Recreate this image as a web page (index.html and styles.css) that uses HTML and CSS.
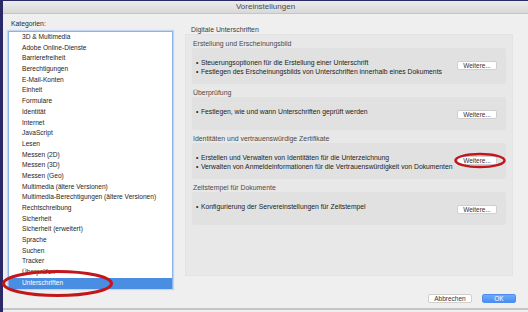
FILE: index.html
```html
<!DOCTYPE html>
<html lang="de">
<head>
    <meta charset="UTF-8">
    <meta name="viewport" content="width=device-width, initial-scale=1.0">
    <title>Voreinstellungen</title>
    <link rel="stylesheet" href="styles.css">
</head>
<body>
    <div class="screen">
        <div class="edge"></div>
        <div class="window">
            <div class="titlebar">Voreinstellungen</div>

            <div class="body">
                <div class="categories">
                    <div class="cat-label">Kategorien:</div>
                    <ul class="cat-list">
                        <li>3D &amp; Multimedia</li>
                        <li>Adobe Online-Dienste</li>
                        <li>Barrierefreiheit</li>
                        <li>Berechtigungen</li>
                        <li>E-Mail-Konten</li>
                        <li>Einheit</li>
                        <li>Formulare</li>
                        <li>Identität</li>
                        <li>Internet</li>
                        <li>JavaScript</li>
                        <li>Lesen</li>
                        <li>Messen (2D)</li>
                        <li>Messen (3D)</li>
                        <li>Messen (Geo)</li>
                        <li>Multimedia (ältere Versionen)</li>
                        <li>Multimedia-Berechtigungen (ältere Versionen)</li>
                        <li>Rechtschreibung</li>
                        <li>Sicherheit</li>
                        <li>Sicherheit (erweitert)</li>
                        <li>Sprache</li>
                        <li>Suchen</li>
                        <li>Tracker</li>
                        <li>Überprüfen</li>
                        <li class="selected">Unterschriften</li>
                    </ul>
                </div>

                <div class="panel">
                    <div class="panel-title">Digitale Unterschriften</div>
                    <div class="group">
                        <div class="section">
                            <div class="section-label">Erstellung und Erscheinungsbild</div>
                            <div class="section-box">
                                <ul class="bullets">
                                    <li>Steuerungsoptionen für die Erstellung einer Unterschrift</li>
                                    <li>Festlegen des Erscheinungsbilds von Unterschriften innerhalb eines Dokuments</li>
                                </ul>
                                <button class="more">Weitere...</button>
                            </div>
                        </div>

                        <div class="section">
                            <div class="section-label">Überprüfung</div>
                            <div class="section-box">
                                <ul class="bullets">
                                    <li>Festlegen, wie und wann Unterschriften geprüft werden</li>
                                </ul>
                                <button class="more">Weitere...</button>
                            </div>
                        </div>

                        <div class="section">
                            <div class="section-label">Identitäten und vertrauenswürdige Zertifikate</div>
                            <div class="section-box">
                                <ul class="bullets">
                                    <li>Erstellen und Verwalten von Identitäten für die Unterzeichnung</li>
                                    <li>Verwalten von Anmeldeinformationen für die Vertrauenswürdigkeit von Dokumenten</li>
                                </ul>
                                <button class="more">Weitere...</button>
                            </div>
                        </div>

                        <div class="section">
                            <div class="section-label">Zeitstempel für Dokumente</div>
                            <div class="section-box">
                                <ul class="bullets">
                                    <li>Konfigurierung der Servereinstellungen für Zeitstempel</li>
                                </ul>
                                <button class="more">Weitere...</button>
                            </div>
                        </div>
                    </div>
                </div>
            </div>

            <div class="footer">
                <button class="btn">Abbrechen</button>
                <button class="btn primary">OK</button>
            </div>
        </div>

        <!-- red annotation marks -->
        <svg class="marks" width="528" height="312" viewBox="0 0 528 312">
            <ellipse cx="57.5" cy="283.5" rx="54" ry="12" fill="none" stroke="#c3161c" stroke-width="3"/>
            <ellipse cx="480" cy="160.5" rx="24.5" ry="6.5" fill="none" stroke="#c3161c" stroke-width="2.5"/>
        </svg>
    </div>
</body>
</html>
```

FILE: styles.css
```css
/* General */
body {
    margin: 0;
    font-family: 'Liberation Sans', Arial, sans-serif;
    background-color: #eeeeee;
}

ul {
    margin: 0;
    padding: 0;
    list-style: none;
}

.screen {
    position: relative;
    display: flex;
    width: 528px;
    height: 312px;
    border-top: 1px solid #2b2868;
    box-sizing: border-box;
    overflow: hidden;
}

.edge {
    width: 3px;
    background-color: #2b2868;
}

.window {
    flex: 1;
    display: flex;
    flex-direction: column;
    background-color: #efefef;
}

/* Title bar */
.titlebar {
    height: 12px;
    line-height: 12px;
    text-align: center;
    font-size: 8px;
    color: #4a4a4a;
    background: linear-gradient(#ececec, #d8d8d8);
    border-bottom: 1px solid #c6c6c6;
}

.body {
    display: flex;
    height: 276px;
}

/* Categories */
.categories {
    width: 177px;
    padding-left: 5px;
}
.cat-label {
    margin-top: 5px;
    padding-left: 3px;
    line-height: 9px;
    font-size: 6.8px;
    color: #2a2a2a;
}
.cat-list {
    margin-top: 3px;
    width: 165px;
    height: 258px;
    box-sizing: border-box;
    background: white;
    border: 1px solid #8db1ea;
    box-shadow: 0 0 1px 1px #c3d7f4;
}
.cat-list li {
    height: 10.7px;
    line-height: 10.7px;
    padding-left: 13px;
    font-size: 6.6px;
    color: #1e1e1e;
    white-space: nowrap;
}
.cat-list li.selected {
    background-color: #4a8ee3;
    color: white;
}

/* Right panel */
.panel {
    width: 328px;
}
.panel-title {
    padding-top: 11px;
    padding-left: 6px;
    line-height: 9px;
    font-size: 6.9px;
    color: #3c3c3c;
}
.group {
    height: 242px;
    box-sizing: border-box;
    padding: 0 6px;
    background-color: #e8e8e8;
    border: 1px solid #e3e3e3;
}
.section-label {
    padding-top: 4px;
    padding-left: 1px;
    line-height: 9px;
    font-size: 6.9px;
    color: #4a4a4a;
}
.section-box {
    display: flex;
    justify-content: space-between;
    align-items: flex-start;
    min-height: 33px;
    box-sizing: border-box;
    padding: 11px 9px 8px 4px;
    background-color: #e1e1e1;
    border-radius: 2px;
}
.bullets li {
    line-height: 8.5px;
    font-size: 6.8px;
    color: #222;
    white-space: nowrap;
}
.bullets li::before {
    content: "•";
    margin-right: 2.5px;
}

/* Buttons */
.more, .btn {
    font-family: 'Liberation Sans', Arial, sans-serif;
    font-size: 6.5px;
    color: #333;
    background: white;
    border: 1px solid #cfcfcf;
    border-radius: 2px;
    padding: 0;
    height: 9px;
    line-height: 7px;
}
.more {
    width: 40px;
    margin-top: 2px;
}

/* Footer */
.footer {
    display: flex;
    justify-content: flex-end;
    gap: 10px;
    height: 20px;
    box-sizing: border-box;
    padding: 4px 12px 0 0;
    border-bottom: 2px solid #c4c4ca;
}
.btn {
    width: 44px;
}
.btn.primary {
    width: 34px;
    color: white;
    border-color: #4d8ff0;
    background: linear-gradient(#6fabfa, #4a8ef2);
}

/* Annotations */
.marks {
    position: absolute;
    top: -1px;
    left: 0;
    pointer-events: none;
}
```
